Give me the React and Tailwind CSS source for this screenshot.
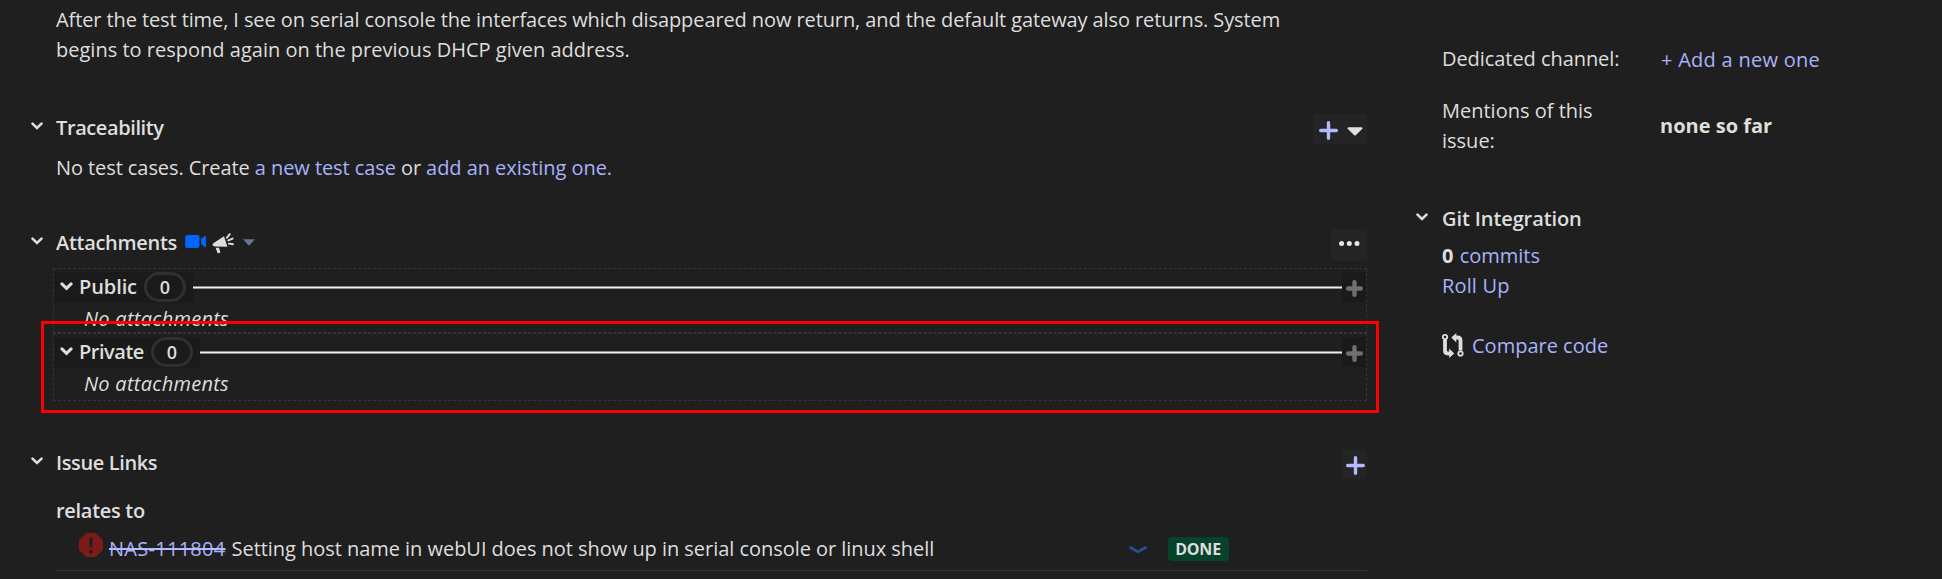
import React from 'react';

function Chevron({ className = '' }) {
  return (
    <svg viewBox="0 0 12 8" className={`h-2 w-3 shrink-0 ${className}`} fill="none" stroke="currentColor" strokeWidth="2.6" strokeLinecap="round" strokeLinejoin="miter">
      <path d="M1.5 1.6 L6 5.9 L10.5 1.6" />
    </svg>
  );
}

function Plus({ className = '' }) {
  return (
    <svg viewBox="0 0 19 19" className={`h-[19px] w-[19px] shrink-0 ${className}`} fill="none" stroke="currentColor" strokeWidth="3.4" strokeLinecap="round">
      <path d="M9.5 1.7 V17.3 M1.7 9.5 H17.3" />
    </svg>
  );
}

function SectionTitle({ children, className = '' }) {
  return (
    <div className="flex h-[30px] items-center">
      <Chevron className="mr-[13px] -mt-1" />
      <h2 className={`font-semibold ${className}`}>{children}</h2>
    </div>
  );
}

function AttachmentGroup({ title, titleClass, className }) {
  return (
    <div className={`ml-[22px] w-[1314px] border border-dashed border-[#353538] ${className}`}>
      <div className="mt-[2px] flex h-8 items-center">
        <div className="flex h-[31px] items-center bg-[#1a1a1a] pl-1.5 pr-[7px]">
          <svg viewBox="0 0 13 9" className="mt-[-2px] h-[9px] w-[13px]" fill="none" stroke="currentColor" strokeWidth="3" strokeLinecap="round">
            <path d="M1.9 1.9 L6.5 6.3 L11.1 1.9" />
          </svg>
          <span className={`ml-1.5 font-semibold ${titleClass}`}>{title}</span>
          <span className="flex h-[30px] w-[42px] items-center justify-center rounded-full border-[3px] border-[#303034] text-[18px] font-semibold">0</span>
        </div>
        <div className="flex h-[3px] flex-1 items-center bg-[#8b8b8b]">
          <div className="h-px w-full bg-[#f0f0f0]" />
        </div>
        <div className="flex h-[30px] w-6 items-center justify-center bg-[#1a1a1a] text-[#707070]">
          <svg viewBox="0 0 17 17" className="mt-0.5 h-[17px] w-[17px]" fill="none" stroke="currentColor" strokeWidth="4.4" strokeLinecap="round">
            <path d="M8.5 2.2 V14.8 M2.2 8.5 H14.8" />
          </svg>
        </div>
      </div>
      <p className="ml-[30px] mt-px h-[28px] italic leading-[30px] tracking-[0.28px]">No attachments</p>
    </div>
  );
}

function Attachments() {
  return (
    <section className="mt-[45px]">
      <div className="flex h-[30px] items-center">
        <SectionTitle className="tracking-[-0.3px]">Attachments</SectionTitle>
        <svg viewBox="0 0 21 13" className="ml-2 h-[13px] w-[21px] mt-[-4px]" fill="#0065ff">
          <rect x="0.2" y="0" width="14.3" height="13" rx="2" />
          <path d="M16 4.2 L19.5 1 Q21 0.6 21 2 V11 Q21 12.4 19.5 12 L16 8.8 Z" />
        </svg>
        <svg viewBox="0 0 22 21" className="ml-1.5 mt-px h-[21px] w-[22px]" fill="#dedede">
          <path d="M12 3.2 L15.4 13.8 L3 13.6 Q0.4 13.4 0.6 10.8 Z" />
          <path d="M3.6 14.8 L7 14.8 L8.4 19.6 L5.8 20.4 Z" />
          <path d="M14.8 4.8 L17.8 1.2 M16.4 7.4 L20.6 5.6 M16.9 10.6 L21 11.2" stroke="#dedede" strokeWidth="1.9" strokeLinecap="round" fill="none" />
        </svg>
        <svg viewBox="0 0 12 7" className="ml-[9px] -mt-px h-[7px] w-3" fill="#67758e">
          <path d="M0 0.3 H12 L6 6.7 Z" />
        </svg>
        <button className="mt-px ml-auto flex h-8 w-9 items-center justify-center self-start bg-[#242424]">
          <svg viewBox="0 0 21 5" className="mt-[-4px] h-[5px] w-[21px]" fill="#e6e6e6">
            <circle cx="2.6" cy="2.5" r="2.5" />
            <circle cx="10.3" cy="2.5" r="2.5" />
            <circle cx="18" cy="2.5" r="2.5" />
          </svg>
        </button>
      </div>
      <AttachmentGroup title="Public" titleClass="w-[65px] tracking-[-0.1px]" className="mt-2.5 h-[65px]" />
      <AttachmentGroup title="Private" titleClass="w-[72px] tracking-[-0.48px]" className="h-[68px]" />
    </section>
  );
}

function IssueLinks() {
  return (
    <section className="mt-[47px]">
      <div className="flex h-[30px] items-center justify-between">
        <SectionTitle className="tracking-[-0.38px]">Issue Links</SectionTitle>
        <button className="mt-[2px] flex h-[30px] w-6 items-center justify-center bg-[#242424] text-[#b3bbff]">
          <Plus className="mt-[3px]" />
        </button>
      </div>
      <h3 className="ml-[25px] mt-[18px] h-[30px] font-semibold leading-[30px] tracking-[-0.3px]">relates to</h3>
      <div className="ml-[25px] mt-2 flex h-[37px] items-start border-b border-[#363636]">
        <svg viewBox="0 0 24 24" className="ml-[23px] -mt-px h-6 w-6 shrink-0">
          <path d="M7.2 0 H16.8 L24 7.2 V16.8 L16.8 24 H7.2 L0 16.8 V7.2 Z" fill="#7d1b1b" />
          <path d="M12 5.5 V13" stroke="#1f1f1f" strokeWidth="3" strokeLinecap="round" />
          <circle cx="12" cy="18.6" r="1.9" fill="#1f1f1f" />
        </svg>
        <a className="ml-[6px] leading-[30px] tracking-[0.28px] text-[#a9b2fb] line-through decoration-[#b3bbff] decoration-2">NAS-111804</a>
        <span className="ml-[6px] w-[897px] leading-[30px] tracking-[-0.04px]">Setting host name in webUI does not show up in serial console or linux shell</span>
        <svg viewBox="0 0 18 8" className="mt-3 h-2 w-[18px] shrink-0" fill="none" stroke="#2a5296" strokeWidth="2.6" strokeLinecap="round">
          <path d="M1.5 1.5 L9 5.8 L16.5 1.5" />
        </svg>
        <span className="ml-[21px] mt-[3px] flex h-6 w-[61px] items-center justify-center rounded bg-[#06422c] text-[16px] font-bold tracking-[-0.2px]">DONE</span>
      </div>
    </section>
  );
}

function Sidebar() {
  return (
    <aside className="w-[500px] pt-11">
      <dl className="ml-[26px] grid grid-cols-[219px_1fr] leading-[30px]">
        <dt className="tracking-[-0.06px]">Dedicated channel:</dt>
        <dd className="pt-px tracking-[0.27px] text-[#a9b2fb]">+ Add a new one</dd>
        <dt className="mt-[21px] w-[170px]">Mentions of this issue:</dt>
        <dd className="mt-[36px] -ml-px font-bold">none so far</dd>
      </dl>
      <section className="mt-12">
        <div className="flex h-[30px] items-center">
          <Chevron className="mr-3.5 -mt-1" />
          <h2 className="font-semibold tracking-[-0.1px]">Git Integration</h2>
        </div>
        <div className="ml-[26px] mt-[7px] leading-[30px] text-[#a9b2fb]">
          <p><b className="text-[#dedede]">0</b> <a className="ml-px">commits</a></p>
          <p className="tracking-[0.15px]">Roll Up</p>
          <p className="mt-[30px] flex items-center">
            <svg viewBox="0 0 22 25" className="-mt-0.5 h-[25px] w-[22px] text-[#dedede]" fill="none" stroke="currentColor">
              <circle cx="3" cy="4" r="2.2" strokeWidth="1.8" />
              <circle cx="18.5" cy="20.5" r="2.2" strokeWidth="1.8" />
              <path d="M3 7 V17.5 Q3 20.5 6 20.5 H8" strokeWidth="3.8" />
              <path d="M18.5 17.5 V7.5 Q18.5 4.5 15.5 4.5 H13.5" strokeWidth="3.8" />
              <path d="M7.2 15.6 L12.2 20.5 L7.2 25 Z M14.3 0 L9.3 4.6 L14.3 9.4 Z" fill="currentColor" stroke="none" />
            </svg>
            <a className="ml-2">Compare code</a>
          </p>
        </div>
      </section>
    </aside>
  );
}

export default function App() {
  return (
    <div className="relative flex h-[579px] w-[1942px] overflow-hidden bg-[#1f1f1f] font-['Open_Sans','Noto_Sans',sans-serif] text-[20px] leading-[30px] text-[#dedede]">
      <main className="ml-[31px] mr-[49px] w-[1336px] shrink-0 pt-[5px]">
        <p className="ml-[25px] w-[1280px] tracking-[-0.1px]">
          After the test time, I see on serial console the interfaces which disappeared now return, and the default gateway also returns. System
          <br />
          <span className="tracking-[0.01px]">begins to respond again on the previous DHCP given address.</span>
        </p>
        <section className="mt-12">
          <div className="flex h-[30px] items-center justify-between">
            <SectionTitle className="tracking-[-0.4px]">Traceability</SectionTitle>
            <button className="mt-[2px] flex h-[30px] w-[54px] items-center bg-[#242424] text-[#b3bbff]">
              <Plus className="ml-1.5 mt-[3px]" />
              <svg viewBox="0 0 16 9" className="ml-[9px] mt-[5px] h-[9px] w-4" fill="#e0e0e0">
                <path d="M1 0.3 H15 L15.6 1.5 L8.5 8.5 H7.5 L0.4 1.5 Z" />
              </svg>
            </button>
          </div>
          <p className="ml-[25px] mt-2.5 tracking-[-0.08px]">
            No test cases. Create <a className="text-[#a9b2fb]">a new test case</a> or <a className="tracking-[-0.05px] text-[#a9b2fb]">add an existing one.</a>
          </p>
        </section>
        <Attachments />
        <IssueLinks />
      </main>
      <Sidebar />
      <div className="absolute left-[41px] top-[321px] h-[92px] w-[1338px] border-[3px] border-[#ff0000]" />
    </div>
  );
}
